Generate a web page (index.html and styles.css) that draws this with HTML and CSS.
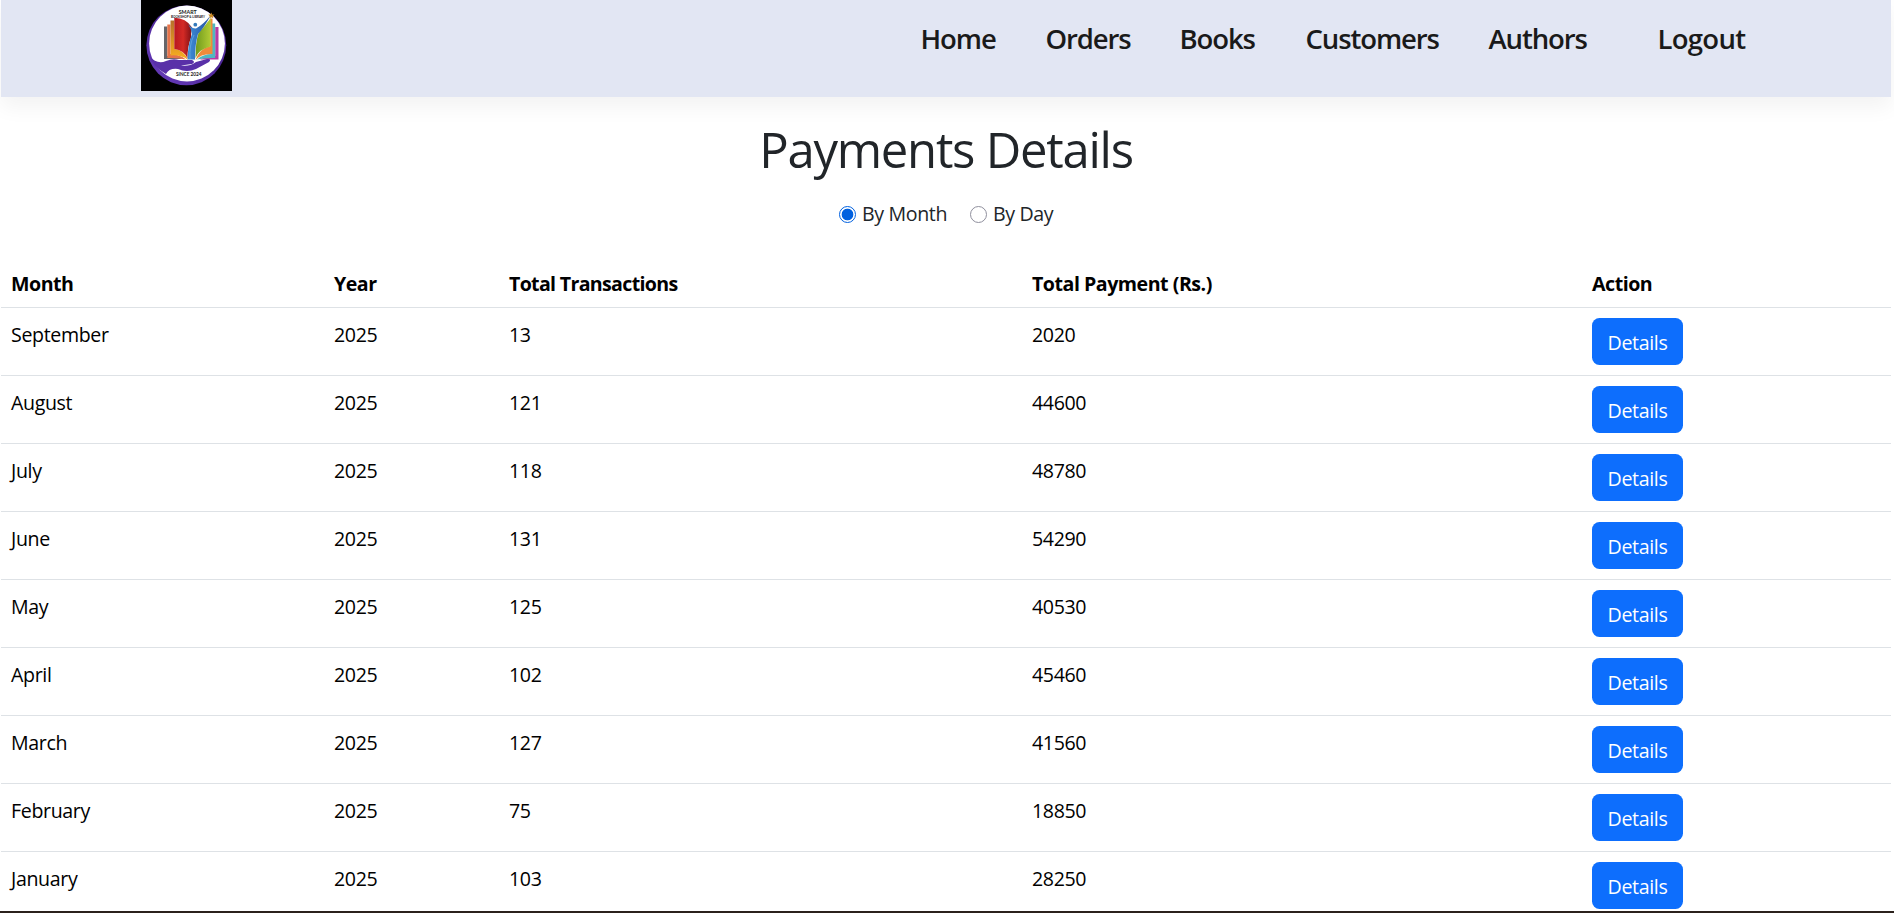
FILE: index.html
```html
<!DOCTYPE html>
<html lang="en">
<head>
<meta charset="utf-8">
<title>Payments Details</title>
<link rel="stylesheet" href="styles.css">
</head>
<body>
<div class="page">
  <header class="navbar">
    <svg class="logo" viewBox="0 0 91 91" role="img" aria-label="Smart Bookshop and Library">
      <defs>
        <linearGradient id="ring" x1="0" x2="1" y1="1" y2="0"><stop offset="0" stop-color="#6b3fc0"/><stop offset=".6" stop-color="#4a2494"/><stop offset="1" stop-color="#7a50c8"/></linearGradient>
        <linearGradient id="red" x1="0" x2="1"><stop offset="0" stop-color="#b81820"/><stop offset=".5" stop-color="#d42a25"/><stop offset="1" stop-color="#7c0f14"/></linearGradient>
        <linearGradient id="green" x1="0" x2="1"><stop offset="0" stop-color="#6f9a1c"/><stop offset="1" stop-color="#b2cb35"/></linearGradient>
        <linearGradient id="gold" x1="0" x2="0" y1="0" y2="1"><stop offset="0" stop-color="#b8702a"/><stop offset="1" stop-color="#f9b01f"/></linearGradient>
        <linearGradient id="blue" x1="0" x2="1"><stop offset="0" stop-color="#3f8fd8"/><stop offset="1" stop-color="#234f9f"/></linearGradient>
      </defs>
      <rect width="91" height="91" fill="#000"/>
      <circle cx="45.300" cy="45.300" r="39.900" fill="url(#ring)"/>
      <circle cx="46" cy="43.500" r="37.900" fill="#fff"/>
      <path d="M23 26.500h3.300V56h8l7 3H23z" fill="#66666a"/>
      <path d="M26.300 24.500h3.200V54Q38 54 45 59.500 36 57.500 26.300 58z" fill="#e5744b"/>
      <path d="M29.500 20.500h3.800V49Q43 50 47 60 40 54.500 29.500 55.500z" fill="url(#gold)"/>
      <path d="M33.300 17.800Q45 18 51 27.500 50 33 50 38 46.500 46 46.500 58.500 43 50 33.300 49z" fill="url(#red)"/>
      <path d="M77.500 27h-3.300v29h-8L59 59.500h18.500z" fill="#b83aa4"/>
      <path d="M74.200 23.500H71V54Q62 54 56 59.500 65 57.500 74.200 58z" fill="#51b7c1"/>
      <path d="M71.500 18.500h-2.300V46Q58 49 54.500 60 60 53.500 71.500 54z" fill="#f08a39"/>
      <path d="M69.700 18V46.500Q58 49 54.500 58 54.500 42 57.500 33 64 26 69.700 18z" fill="url(#green)"/>
      <path d="M47 24Q50.500 28.500 55 28.500 63 24 69.500 15.500 63 28 57 34 54 44 54 59.500H46.500Q47 44 51 34 50 28 47 24z" fill="url(#blue)"/>
      <path d="M53 35Q48 45 49 59" fill="none" stroke="#6fb2e6" stroke-width=".6"/>
      <circle cx="54.300" cy="24.700" r="1.900" fill="#347abb"/>
      <path d="m70.300 12.500 1 2.200 2.200-.1-1.700 1.500.5 2.200-2-1.100-2 1.300.5-2.300-1.600-1.600 2.200-.1z" fill="#c88922"/>
      <path d="M8.500 56Q16 65 25 61 32 58 38 60L51 60Q55 62 51 64L40 65.500Q48 67 55 62L66 59Q71 58.500 68 62L55 69Q46 73 37 69 28 68 25 74 12 67 8.500 56z" fill="#5930a8"/>
      <text x="46.700" y="14.200" class="logo-name" textLength="18" lengthAdjust="spacingAndGlyphs">SMART</text>
      <text x="47" y="17.500" class="logo-sub" textLength="34" lengthAdjust="spacingAndGlyphs">BOOKSHOP &amp; LIBRARY</text>
      <text x="47.700" y="75.700" class="logo-since" textLength="25.500" lengthAdjust="spacingAndGlyphs">SINCE 2024</text>
    </svg>
    <nav class="links">
      <a>Home</a><a>Orders</a><a>Books</a><a>Customers</a><a>Authors</a><a>Logout</a>
    </nav>
  </header>
  <main>
    <h1 class="title">Payments Details</h1>
    <div class="filters">
      <label class="choice by-month"><span class="radio checked"></span><span>By Month</span></label>
      <label class="choice"><span class="radio"></span><span>By Day</span></label>
    </div>
    <table class="payments">
      <colgroup><col class="c-month"><col class="c-year"><col class="c-count"><col class="c-total"><col></colgroup>
      <thead><tr><th>Month</th><th>Year</th><th class="count">Total Transactions</th><th>Total Payment (Rs.)</th><th>Action</th></tr></thead>
      <tbody>
        <tr><td>September</td><td>2025</td><td>13</td><td>2020</td><td class="action"><button class="btn">Details</button></td></tr>
        <tr><td>August</td><td>2025</td><td>121</td><td>44600</td><td class="action"><button class="btn">Details</button></td></tr>
        <tr><td>July</td><td>2025</td><td>118</td><td>48780</td><td class="action"><button class="btn">Details</button></td></tr>
        <tr><td>June</td><td>2025</td><td>131</td><td>54290</td><td class="action"><button class="btn">Details</button></td></tr>
        <tr><td>May</td><td>2025</td><td>125</td><td>40530</td><td class="action"><button class="btn">Details</button></td></tr>
        <tr><td>April</td><td>2025</td><td>102</td><td>45460</td><td class="action"><button class="btn">Details</button></td></tr>
        <tr><td>March</td><td>2025</td><td>127</td><td>41560</td><td class="action"><button class="btn">Details</button></td></tr>
        <tr><td>February</td><td>2025</td><td>75</td><td>18850</td><td class="action"><button class="btn">Details</button></td></tr>
        <tr><td>January</td><td>2025</td><td>103</td><td>28250</td><td class="action"><button class="btn">Details</button></td></tr>
      </tbody>
    </table>
  </main>
</div>
</body>
</html>
```
FILE: styles.css
```css
* { box-sizing: border-box; }
html, body { height: 100%; overflow: hidden; }
body {
  margin: 0;
  background: #fff;
  color: #212529;
  font-family: "Segoe UI", "Open Sans", "Noto Sans", sans-serif;
  font-size: 19.6px;
  line-height: 30px;
  letter-spacing: -.36px;
}
.page {
  height: 913px;
  padding: 0 3px 0 1px;
  overflow: hidden;
  border-bottom: 2px solid #2b211c;
}
.navbar {
  display: flex;
  height: 97px;
  padding-left: 140px;
  background: #e2e6f3;
  box-shadow: 0 10px 20px rgba(0, 0, 0, .05);
}
.logo { flex: none; width: 91px; height: 91px; }
.logo text { text-anchor: middle; font-family: Lato, sans-serif; letter-spacing: 0; fill: #222; }
.logo .logo-name { font-size: 5.6px; font-weight: 700; }
.logo .logo-sub { font-size: 3.4px; font-weight: 700; }
.logo .logo-since { font-size: 5px; font-weight: 700; }
.links {
  display: grid;
  grid-template-columns: 125px 134px 126px 183px 169px auto;
  margin-left: 688.5px;
  padding-top: 20px;
  font-size: 27.500px;
  font-weight: 600;
  line-height: 38px;
  letter-spacing: -1.1px;
  color: #1a1a1a;
  white-space: nowrap;
}
.links a:last-child { letter-spacing: -.7px; }
.title {
  margin: 22px 0 0;
  font-size: 49px;
  font-weight: 400;
  line-height: 60px;
  letter-spacing: -1.25px;
  text-align: center;
}
.filters { display: flex; margin: 20px 0 28px 838px; }
.choice { display: flex; align-items: center; gap: 6px; white-space: nowrap; }
.by-month { width: 131px; }
.radio {
  width: 17px;
  height: 17px;
  border: 1px solid #8f8f9d;
  border-radius: 50%;
}
.radio.checked { border-color: #0060df; background: radial-gradient(circle, #0060df 5.5px, #fff 6.2px); }
.payments {
  width: 1890px;
  border-collapse: collapse;
  table-layout: fixed;
  color: #000;
}
.c-month { width: 323px; }
.c-year { width: 175px; }
.c-count { width: 523px; }
.c-total { width: 560px; }
th, td {
  padding: 12px 10px 8px;
  border-bottom: 1px solid #dee2e6;
  text-align: left;
  vertical-align: top;
}
th { font-weight: 700; letter-spacing: -.48px; }
.count { letter-spacing: -.68px; }
.action { padding: 10px; }
.btn {
  display: block;
  width: 91px;
  height: 47px;
  margin: 0;
  padding: 2px 0 0;
  border: 0;
  border-radius: 7.500px;
  background: #0d6efd;
  color: #fff;
  font: inherit;
  letter-spacing: -.36px;
  text-align: center;
}
```
